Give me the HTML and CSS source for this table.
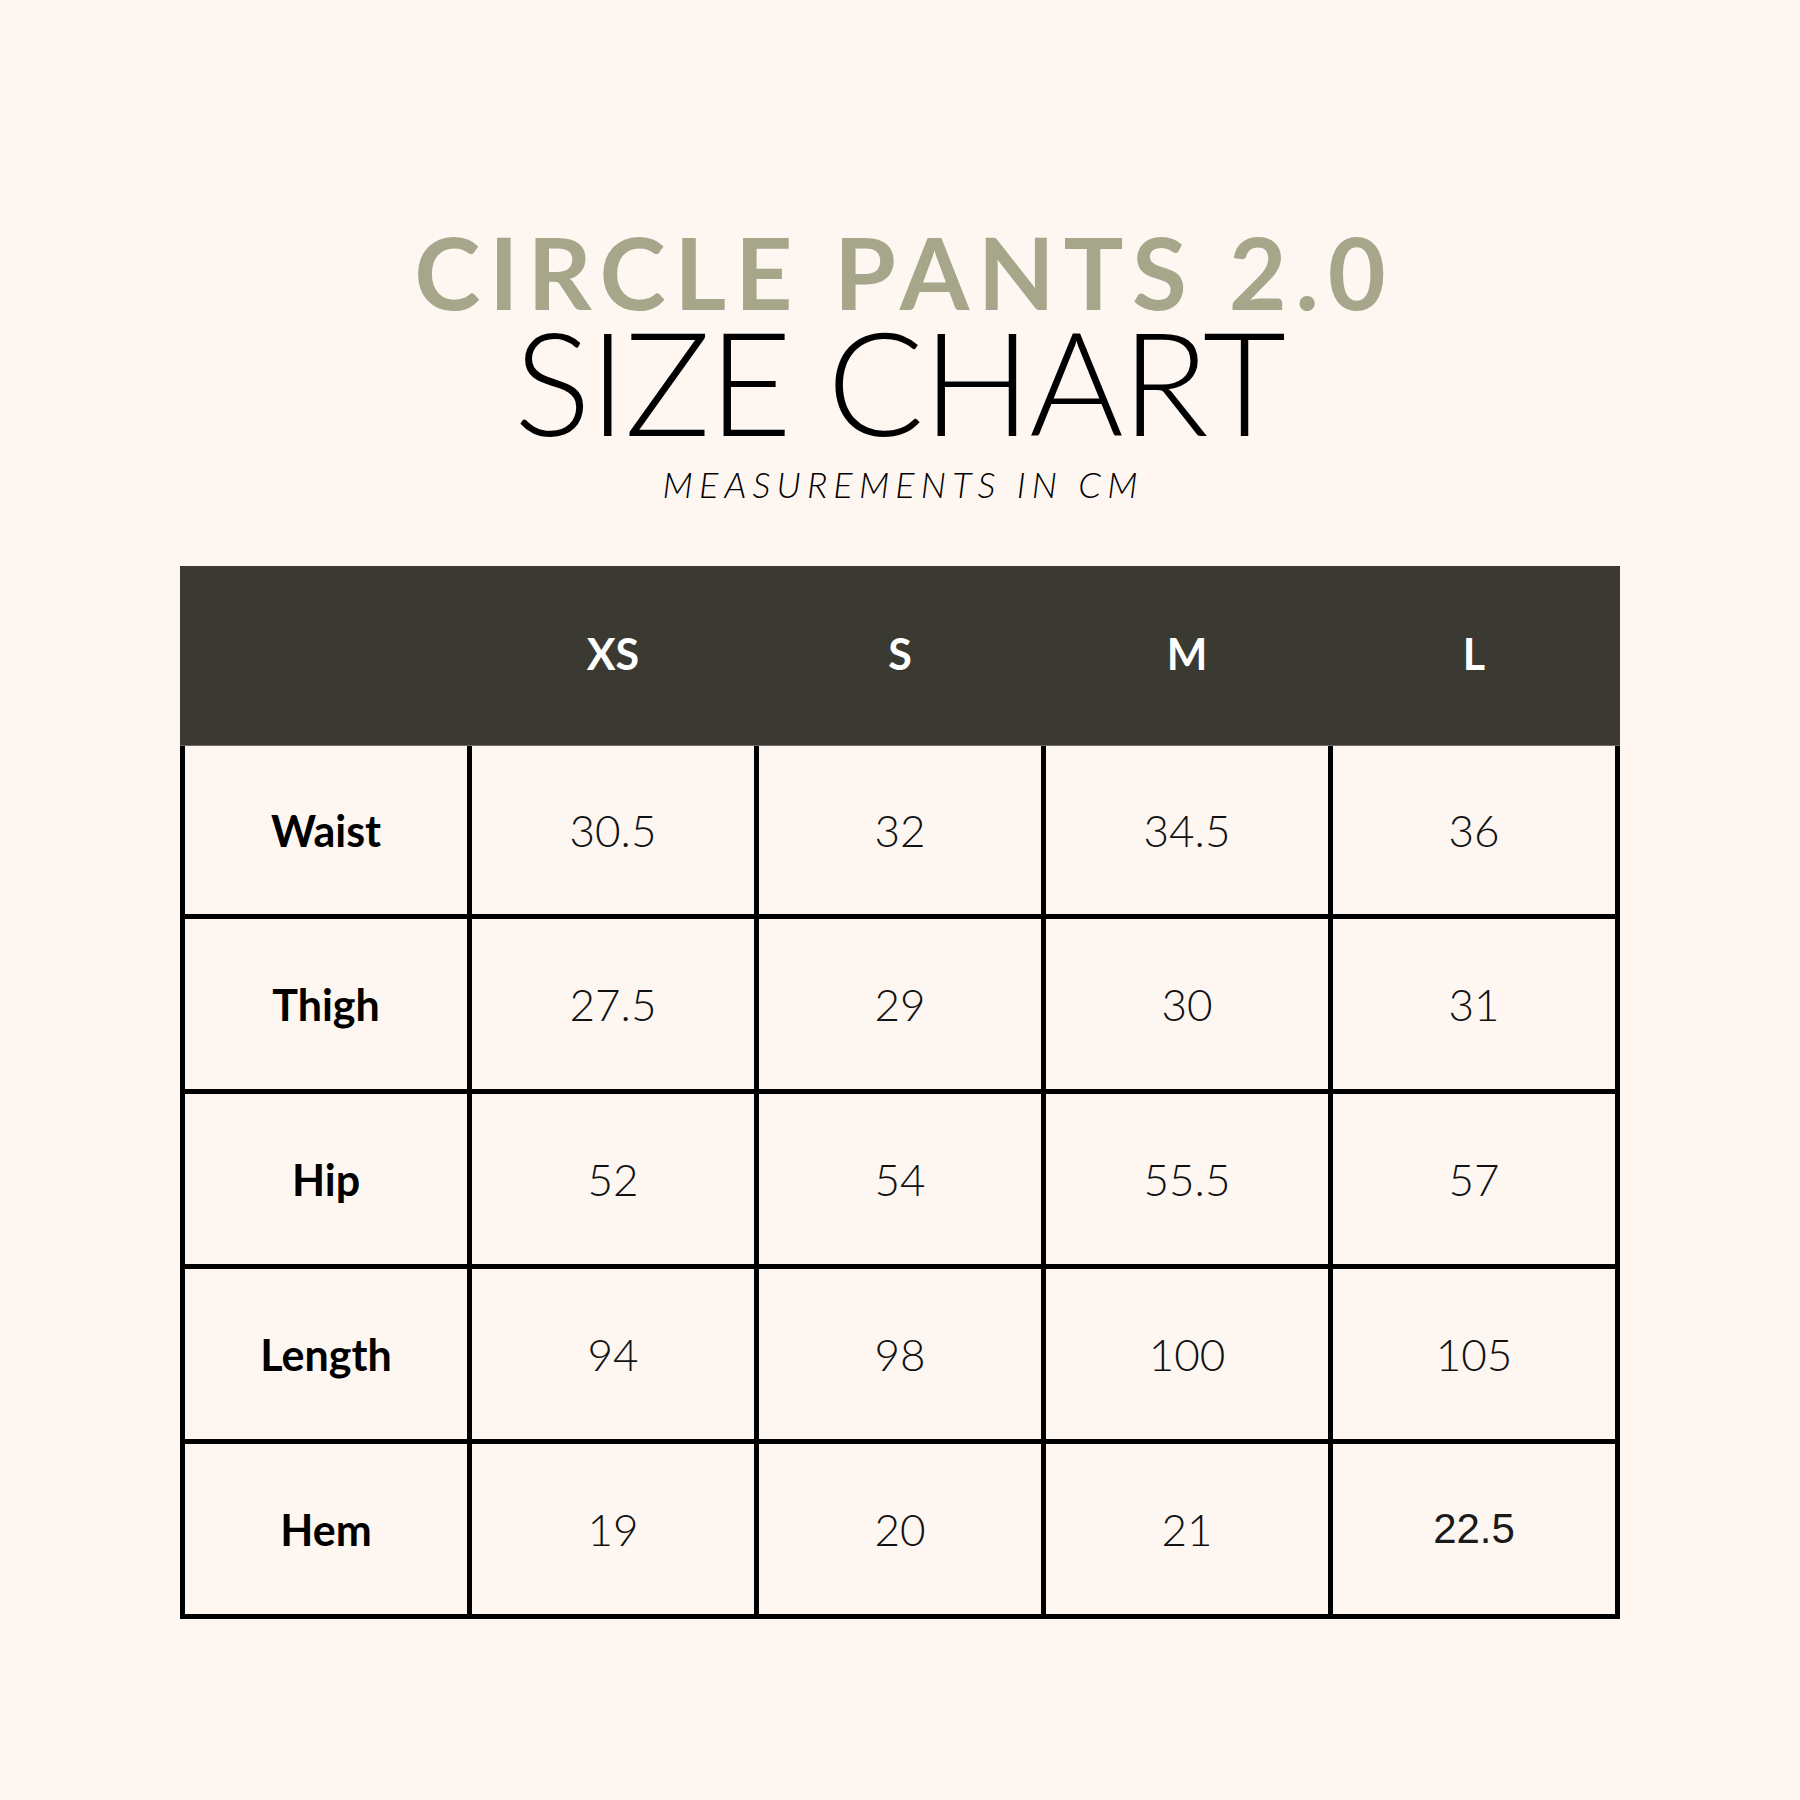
FILE: index.html
```html
<!DOCTYPE html>
<html lang="en">
<head>
<meta charset="utf-8">
<title>Circle Pants 2.0 Size Chart</title>
<link rel="stylesheet" href="styles.css">
</head>
<body>
<main class="page">
  <header class="heading">
    <h1 class="product">CIRCLE PANTS 2.0</h1>
    <h2 class="chart-title">SIZE CHART</h2>
    <p class="units">MEASUREMENTS IN CM</p>
  </header>
  <section class="table">
    <div class="thead">
      <div class="th"></div>
      <div class="th">XS</div>
      <div class="th">S</div>
      <div class="th">M</div>
      <div class="th">L</div>
    </div>
    <div class="tbody">
      <div class="td label">Waist</div>
      <div class="td">30.5</div>
      <div class="td">32</div>
      <div class="td">34.5</div>
      <div class="td">36</div>

      <div class="td label">Thigh</div>
      <div class="td">27.5</div>
      <div class="td">29</div>
      <div class="td">30</div>
      <div class="td">31</div>

      <div class="td label">Hip</div>
      <div class="td">52</div>
      <div class="td">54</div>
      <div class="td">55.5</div>
      <div class="td">57</div>

      <div class="td label">Length</div>
      <div class="td">94</div>
      <div class="td">98</div>
      <div class="td">100</div>
      <div class="td">105</div>

      <div class="td label">Hem</div>
      <div class="td">19</div>
      <div class="td">20</div>
      <div class="td">21</div>
      <div class="td alt">22.5</div>
    </div>
  </section>
</main>
</body>
</html>
```

FILE: styles.css
```css
* { box-sizing: border-box; }

html, body {
  margin: 0;
  padding: 0;
  background: #fdf6f1;
}

body {
  font-family: "Lato", "Noto Sans", sans-serif;
  color: #000;
  width: 1800px;
  height: 1800px;
}

.page {
  padding-top: 231px;
  display: flex;
  flex-direction: column;
  align-items: center;
}

.heading {
  display: flex;
  flex-direction: column;
  align-items: center;
}

.product {
  margin: 0;
  font-size: 100px;
  line-height: 80px;
  height: 80px;
  font-weight: 700;
  color: #a6a68b;
  letter-spacing: 0.087em;
  margin-right: -0.087em;
  white-space: nowrap;
}

.chart-title {
  margin: 10px 0 0 0;
  font-size: 144px;
  line-height: 120px;
  height: 120px;
  font-weight: 300;
  letter-spacing: -2px;
  margin-right: 2px;
  white-space: nowrap;
}

.units {
  margin: 25px 0 0 0;
  font-size: 36px;
  line-height: 36px;
  height: 36px;
  font-style: italic;
  font-weight: 300;
  letter-spacing: 0.17em;
  margin-right: -0.17em;
  white-space: nowrap;
}

.table {
  margin-top: 64px;
  width: 1440px;
}

.thead {
  display: grid;
  grid-template-columns: repeat(5, 1fr);
  column-gap: 5px;
  padding: 0 5px;
  height: 180px;
  background: #3b3a32;
  border-bottom: 1px solid #6a6962;
}

.th {
  display: flex;
  align-items: center;
  justify-content: center;
  color: #fff;
  font-weight: 700;
  font-size: 43px;
  padding-bottom: 5px;
}

.tbody {
  display: grid;
  grid-template-columns: repeat(5, 1fr);
  grid-template-rows: 168px repeat(4, 170px);
  gap: 5px;
  padding: 0 5px 5px 5px;
  background: #000;
}

.td {
  background: #fdf6f1;
  display: flex;
  align-items: center;
  justify-content: center;
  font-size: 44px;
  font-weight: 300;
  color: #111;
}

.td.label {
  font-weight: 700;
  font-size: 43px;
  color: #000;
}

.td.alt {
  font-family: "Liberation Sans", Arial, sans-serif;
  font-weight: 400;
  font-size: 42px;
  color: #1a1a1a;
}
```
